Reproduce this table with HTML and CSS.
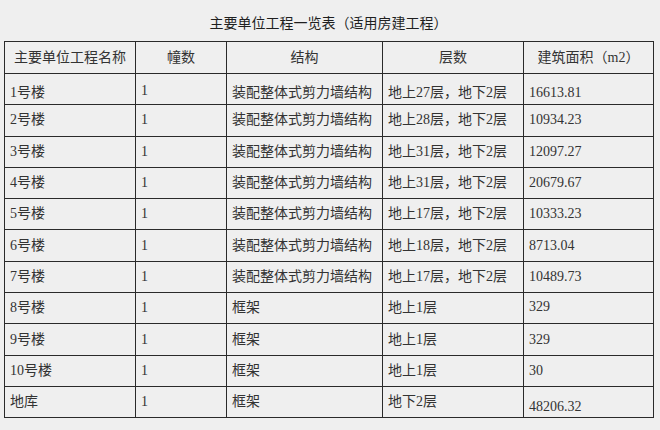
FILE: index.html
```html
<!DOCTYPE html>
<html lang="zh-CN">
<head>
<meta charset="utf-8">
<title>主要单位工程一览表</title>
<link rel="stylesheet" href="styles.css">
</head>
<body>
<div class="page">
  <h1 class="title">主要单位工程一览表（适用房建工程）</h1>
  <table class="grid">
    <colgroup>
      <col class="c1"><col class="c2"><col class="c3"><col class="c4"><col class="c5">
    </colgroup>
    <thead>
      <tr><th>主要单位工程名称</th><th>幢数</th><th>结构</th><th>层数</th><th>建筑面积（m2）</th></tr>
    </thead>
    <tbody>
      <tr class="first"><td>1号楼</td><td class="top">1</td><td>装配整体式剪力墙结构</td><td>地上27层，地下2层</td><td>16613.81</td></tr>
      <tr><td>2号楼</td><td>1</td><td>装配整体式剪力墙结构</td><td>地上28层，地下2层</td><td>10934.23</td></tr>
      <tr><td>3号楼</td><td>1</td><td>装配整体式剪力墙结构</td><td>地上31层，地下2层</td><td>12097.27</td></tr>
      <tr><td>4号楼</td><td>1</td><td>装配整体式剪力墙结构</td><td>地上31层，地下2层</td><td>20679.67</td></tr>
      <tr><td>5号楼</td><td>1</td><td>装配整体式剪力墙结构</td><td>地上17层，地下2层</td><td>10333.23</td></tr>
      <tr><td>6号楼</td><td>1</td><td>装配整体式剪力墙结构</td><td>地上18层，地下2层</td><td>8713.04</td></tr>
      <tr><td>7号楼</td><td>1</td><td>装配整体式剪力墙结构</td><td>地上17层，地下2层</td><td>10489.73</td></tr>
      <tr><td>8号楼</td><td>1</td><td>框架</td><td>地上1层</td><td class="top">329</td></tr>
      <tr><td>9号楼</td><td>1</td><td>框架</td><td>地上1层</td><td>329</td></tr>
      <tr><td>10号楼</td><td>1</td><td>框架</td><td>地上1层</td><td>30</td></tr>
      <tr><td>地库</td><td>1</td><td>框架</td><td>地下2层</td><td class="bottom">48206.32</td></tr>
    </tbody>
  </table>
</div>
</body>
</html>
```
FILE: styles.css
```css
html, body {
  margin: 0;
  padding: 0;
  background: #efefef;
}

.page {
  width: 660px;
  height: 430px;
  padding: 0 0 0 4px;
  box-sizing: border-box;
  font-family: "Liberation Serif", "Noto Sans CJK SC", serif;
  color: #2e2e2e;
}

.title {
  margin: 0;
  width: 649px;
  height: 41px;
  box-sizing: border-box;
  padding-top: 14px;
  text-align: center;
  font-size: 14px;
  line-height: 20px;
  font-weight: normal;
  color: #1f1f1f;
}

.grid {
  border-collapse: collapse;
  table-layout: fixed;
  width: 649px;
  font-size: 14px;
}

.c1 { width: 131px; }
.c2 { width: 91px; }
.c3 { width: 156px; }
.c4 { width: 141px; }
.c5 { width: 130px; }

.grid th,
.grid td {
  border: 1.5px solid #2a2a2a;
  padding: 0 5px;
  height: 31.3px;
  box-sizing: border-box;
  line-height: 18px;
  white-space: nowrap;
  overflow: hidden;
  vertical-align: middle;
}

.grid th {
  height: 32px;
  font-weight: normal;
  text-align: center;
  color: #333;
}

.grid td {
  text-align: left;
  color: #333;
}

.grid tr.first td {
  padding-top: 8px;
}

.grid tr.first td.top {
  padding-top: 4px;
  padding-bottom: 0;
}

.grid td.top {
  padding-bottom: 3px;
}

.grid td.bottom {
  padding-top: 10px;
}
```
